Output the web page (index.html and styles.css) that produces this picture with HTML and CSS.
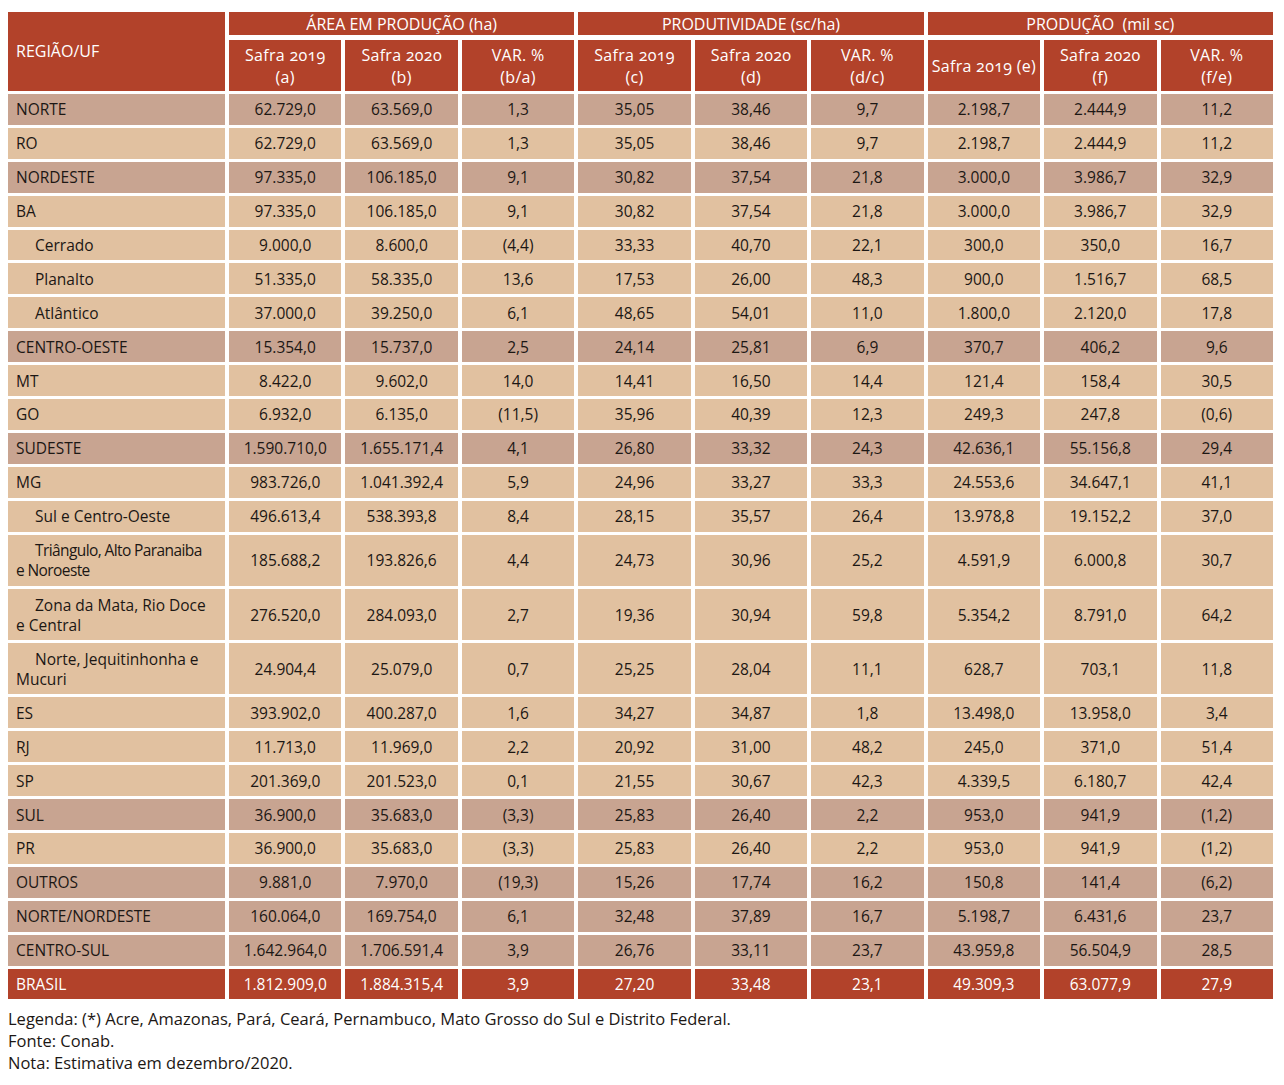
FILE: index.html
```html
<!DOCTYPE html>
<html lang="pt-BR">
<head>
<meta charset="utf-8">
<title>Café - Área, produtividade e produção</title>
<link rel="stylesheet" href="styles.css">
</head>
<body>
<table class="data">
  <colgroup>
    <col class="c-first">
    <col><col><col><col><col><col><col><col><col>
  </colgroup>
  <thead>
    <tr class="h1">
      <th rowspan="2" class="reg">REGIÃO/UF</th>
      <th colspan="3" class="grp">ÁREA EM PRODUÇÃO (ha)</th>
      <th colspan="3" class="grp">PRODUTIVIDADE (sc/ha)</th>
      <th colspan="3" class="grp">PRODUÇÃO&nbsp; (mil sc)</th>
    </tr>
    <tr class="h2">
      <th>Safra 2019<br>(a)</th>
      <th>Safra 2020<br>(b)</th>
      <th>VAR. %<br>(b/a)</th>
      <th>Safra 2019<br>(c)</th>
      <th>Safra 2020<br>(d)</th>
      <th>VAR. %<br>(d/c)</th>
      <th>Safra 2019 (e)</th>
      <th>Safra 2020<br>(f)</th>
      <th>VAR. %<br>(f/e)</th>
    </tr>
  </thead>
  <tbody>
    <tr class="dark"><td>NORTE</td><td>62.729,0</td><td>63.569,0</td><td>1,3</td><td>35,05</td><td>38,46</td><td>9,7</td><td>2.198,7</td><td>2.444,9</td><td>11,2</td></tr>
    <tr class="light"><td>RO</td><td>62.729,0</td><td>63.569,0</td><td>1,3</td><td>35,05</td><td>38,46</td><td>9,7</td><td>2.198,7</td><td>2.444,9</td><td>11,2</td></tr>
    <tr class="dark"><td>NORDESTE</td><td>97.335,0</td><td>106.185,0</td><td>9,1</td><td>30,82</td><td>37,54</td><td>21,8</td><td>3.000,0</td><td>3.986,7</td><td>32,9</td></tr>
    <tr class="light"><td>BA</td><td>97.335,0</td><td>106.185,0</td><td>9,1</td><td>30,82</td><td>37,54</td><td>21,8</td><td>3.000,0</td><td>3.986,7</td><td>32,9</td></tr>
    <tr class="light"><td class="sub">Cerrado</td><td>9.000,0</td><td>8.600,0</td><td>(4,4)</td><td>33,33</td><td>40,70</td><td>22,1</td><td>300,0</td><td>350,0</td><td>16,7</td></tr>
    <tr class="light"><td class="sub">Planalto</td><td>51.335,0</td><td>58.335,0</td><td>13,6</td><td>17,53</td><td>26,00</td><td>48,3</td><td>900,0</td><td>1.516,7</td><td>68,5</td></tr>
    <tr class="light"><td class="sub">Atlântico</td><td>37.000,0</td><td>39.250,0</td><td>6,1</td><td>48,65</td><td>54,01</td><td>11,0</td><td>1.800,0</td><td>2.120,0</td><td>17,8</td></tr>
    <tr class="dark"><td>CENTRO-OESTE</td><td>15.354,0</td><td>15.737,0</td><td>2,5</td><td>24,14</td><td>25,81</td><td>6,9</td><td>370,7</td><td>406,2</td><td>9,6</td></tr>
    <tr class="light"><td>MT</td><td>8.422,0</td><td>9.602,0</td><td>14,0</td><td>14,41</td><td>16,50</td><td>14,4</td><td>121,4</td><td>158,4</td><td>30,5</td></tr>
    <tr class="light"><td>GO</td><td>6.932,0</td><td>6.135,0</td><td>(11,5)</td><td>35,96</td><td>40,39</td><td>12,3</td><td>249,3</td><td>247,8</td><td>(0,6)</td></tr>
    <tr class="dark"><td>SUDESTE</td><td>1.590.710,0</td><td>1.655.171,4</td><td>4,1</td><td>26,80</td><td>33,32</td><td>24,3</td><td>42.636,1</td><td>55.156,8</td><td>29,4</td></tr>
    <tr class="light"><td>MG</td><td>983.726,0</td><td>1.041.392,4</td><td>5,9</td><td>24,96</td><td>33,27</td><td>33,3</td><td>24.553,6</td><td>34.647,1</td><td>41,1</td></tr>
    <tr class="light"><td class="sub">Sul e Centro-Oeste</td><td>496.613,4</td><td>538.393,8</td><td>8,4</td><td>28,15</td><td>35,57</td><td>26,4</td><td>13.978,8</td><td>19.152,2</td><td>37,0</td></tr>
    <tr class="light tall"><td class="sub tight">Triângulo, Alto Paranaiba<br>e Noroeste</td><td>185.688,2</td><td>193.826,6</td><td>4,4</td><td>24,73</td><td>30,96</td><td>25,2</td><td>4.591,9</td><td>6.000,8</td><td>30,7</td></tr>
    <tr class="light tall"><td class="sub">Zona da Mata, Rio Doce e Central</td><td>276.520,0</td><td>284.093,0</td><td>2,7</td><td>19,36</td><td>30,94</td><td>59,8</td><td>5.354,2</td><td>8.791,0</td><td>64,2</td></tr>
    <tr class="light tall"><td class="sub">Norte, Jequitinhonha e Mucuri</td><td>24.904,4</td><td>25.079,0</td><td>0,7</td><td>25,25</td><td>28,04</td><td>11,1</td><td>628,7</td><td>703,1</td><td>11,8</td></tr>
    <tr class="light"><td>ES</td><td>393.902,0</td><td>400.287,0</td><td>1,6</td><td>34,27</td><td>34,87</td><td>1,8</td><td>13.498,0</td><td>13.958,0</td><td>3,4</td></tr>
    <tr class="light"><td>RJ</td><td>11.713,0</td><td>11.969,0</td><td>2,2</td><td>20,92</td><td>31,00</td><td>48,2</td><td>245,0</td><td>371,0</td><td>51,4</td></tr>
    <tr class="light"><td>SP</td><td>201.369,0</td><td>201.523,0</td><td>0,1</td><td>21,55</td><td>30,67</td><td>42,3</td><td>4.339,5</td><td>6.180,7</td><td>42,4</td></tr>
    <tr class="dark"><td>SUL</td><td>36.900,0</td><td>35.683,0</td><td>(3,3)</td><td>25,83</td><td>26,40</td><td>2,2</td><td>953,0</td><td>941,9</td><td>(1,2)</td></tr>
    <tr class="light"><td>PR</td><td>36.900,0</td><td>35.683,0</td><td>(3,3)</td><td>25,83</td><td>26,40</td><td>2,2</td><td>953,0</td><td>941,9</td><td>(1,2)</td></tr>
    <tr class="dark"><td>OUTROS</td><td>9.881,0</td><td>7.970,0</td><td>(19,3)</td><td>15,26</td><td>17,74</td><td>16,2</td><td>150,8</td><td>141,4</td><td>(6,2)</td></tr>
    <tr class="dark"><td>NORTE/NORDESTE</td><td>160.064,0</td><td>169.754,0</td><td>6,1</td><td>32,48</td><td>37,89</td><td>16,7</td><td>5.198,7</td><td>6.431,6</td><td>23,7</td></tr>
    <tr class="dark"><td>CENTRO-SUL</td><td>1.642.964,0</td><td>1.706.591,4</td><td>3,9</td><td>26,76</td><td>33,11</td><td>23,7</td><td>43.959,8</td><td>56.504,9</td><td>28,5</td></tr>
    <tr class="total"><td>BRASIL</td><td>1.812.909,0</td><td>1.884.315,4</td><td>3,9</td><td>27,20</td><td>33,48</td><td>23,1</td><td>49.309,3</td><td>63.077,9</td><td>27,9</td></tr>
  </tbody>
</table>
<div class="notes">
  <p>Legenda: (*) Acre, Amazonas, Pará, Ceará, Pernambuco, Mato Grosso do Sul e Distrito Federal.</p>
  <p>Fonte: Conab.</p>
  <p>Nota: Estimativa em dezembro/2020.</p>
</div>
</body>
</html>
```
FILE: styles.css
```css
html, body {
  margin: 0;
  padding: 0;
  background: #ffffff;
}

body {
  font-family: "Open Sans", Lato, "Liberation Sans", sans-serif;
  color: #1c1714;
  font-size: 15.5px;
}

.data {
  table-layout: fixed;
  width: 1273px;
  border-collapse: separate;
  border-spacing: 4px 3px;
  margin: 9px 0 0 4px;
}

.c-first {
  width: 217px;
}

.data th {
  background: #b2422a;
  color: #ffffff;
  font-weight: normal;
  font-size: 16px;
  line-height: 20px;
  text-align: center;
  padding: 0;
}

.data th.reg {
  text-align: left;
  padding-left: 8px;
  padding-bottom: 2px;
}

.h1 th.grp {
  height: 23px;
  border-bottom: 2px solid #ffffff;
}

.h2 th {
  height: 51px;
  font-size: 16px;
  line-height: 22px;
  letter-spacing: 0.3px;
  font-variant-numeric: oldstyle-nums;
}

.data td {
  height: 30.9px;
  padding: 0;
  text-align: center;
  line-height: 20px;
  font-size: 15.5px;
}

.data td:first-child {
  text-align: left;
  padding-left: 8px;
  padding-right: 10px;
}

.data td.sub {
  text-indent: 19px;
}

.data td.tight {
  letter-spacing: -0.6px;
  padding-right: 0;
  white-space: nowrap;
}

.data tr.tall td {
  height: 51.3px;
}

.dark td {
  background: #c8a491;
}

.light td {
  background: #e1c1a0;
}

.total td {
  background: #b2422a;
  color: #ffffff;
}

.notes {
  margin: 6px 0 0 8px;
  font-size: 16.5px;
  line-height: 22px;
  color: #1c1714;
}

.notes p {
  margin: 0;
}
```
